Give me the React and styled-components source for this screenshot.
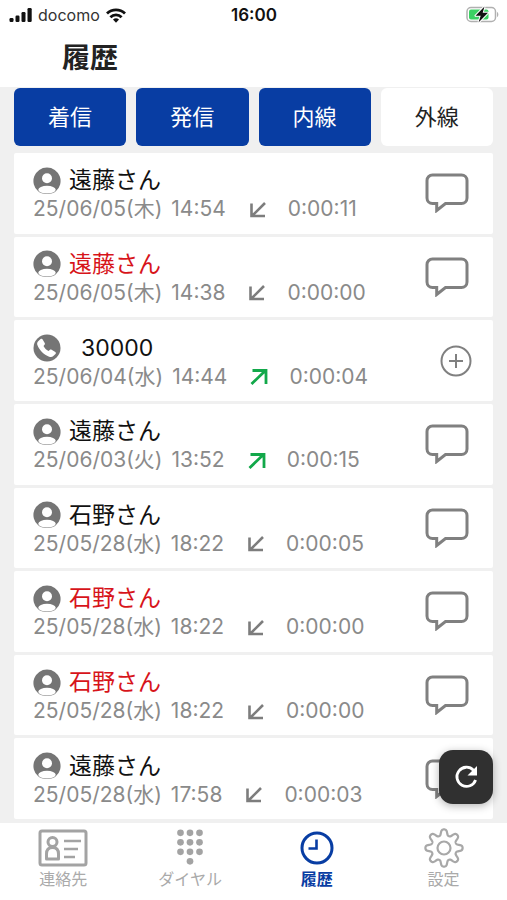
import React from "react";
import styled, { createGlobalStyle } from "styled-components";

const GlobalStyle = createGlobalStyle`
  * { box-sizing: border-box; }
  html, body { margin: 0; padding: 0; background: #fff; }
  body, button {
    font-family: Inter, "Noto Sans CJK JP", sans-serif;
  }
  button { border: 0; padding: 0; margin: 0; background: none; cursor: pointer; }
  svg { display: block; flex: none; }
`;

const Screen = styled.div`
  display: flex;
  flex-direction: column;
  min-height: 100vh;
  background: #f0f0f0;
  color: #111;
`;

const Header = styled.header`
  background: #fff;
  height: 87px;
`;

const StatusBar = styled.div`
  display: grid;
  grid-template-columns: 1fr auto 1fr;
  align-items: center;
  height: 30px;
  padding: 0 8px 0 9px;
`;

const Carrier = styled.div`
  display: flex;
  align-items: center;
  gap: 6px;
  font-size: 16px;
  line-height: 20px;
  color: #333;
`;

const Clock = styled.time`
  font-size: 17px;
  line-height: 20px;
  font-weight: 600;
`;

const Battery = styled.div`
  justify-self: end;
`;

const Title = styled.h1`
  margin: 0;
  padding-left: 62px;
  font-size: 28px;
  line-height: 56px;
  font-weight: 700;
  color: #222;
`;

const Filters = styled.div`
  display: grid;
  grid-template-columns: repeat(4, 1fr);
  gap: 10px;
  padding: 1px 14px 7px;
`;

const FilterButton = styled.button`
  height: 58px;
  border-radius: 6px;
  font-size: 22px;
  line-height: 32px;
  background: ${(p) => (p.$on ? "#083da3" : "#fff")};
  color: ${(p) => (p.$on ? "#fff" : "#222")};
`;

const List = styled.ul`
  flex: 1;
  display: flex;
  flex-direction: column;
  gap: 3px;
  margin: 0;
  padding: 0 14px 4px;
  list-style: none;
`;

const Row = styled.li`
  flex: 1;
  display: flex;
  align-items: center;
  justify-content: space-between;
  min-height: 76px;
  padding: 0 21px 0 19px;
  background: #fff;
  border-radius: 2px;
`;

const Entry = styled.div`
  display: flex;
  flex-direction: column;
  padding-top: 3px;
`;

const Name = styled.div`
  display: flex;
  align-items: center;
  gap: ${(p) => (p.$number ? "20px" : "8px")};
  font-size: 23px;
  line-height: 29px;
  color: ${(p) => (p.$missed ? "#d7141a" : "#111")};
`;

const Meta = styled.div`
  display: flex;
  align-items: center;
  font-size: 21px;
  line-height: 28px;
  color: #8a8a8a;
`;

const Time = styled.span`
  margin: 0 23px 0 9px;
`;

const Duration = styled.span`
  margin-left: 21px;
`;

const RowAction = styled.button`
  display: flex;
  margin-right: ${(p) => (p.$message ? "3px" : 0)};
`;

const Refresh = styled.button`
  position: fixed;
  right: 14px;
  bottom: 96px;
  display: flex;
  align-items: center;
  justify-content: center;
  width: 54px;
  height: 54px;
  border-radius: 14px;
  background: #303030;
  box-shadow: 0 2px 8px rgba(0, 0, 0, 0.3);
`;

const TabBar = styled.nav`
  display: grid;
  grid-template-columns: repeat(4, 1fr);
  height: 77px;
  background: #fff;
`;

const Tab = styled.button`
  display: flex;
  flex-direction: column;
  align-items: center;
  padding-top: 4px;
  font-size: 16px;
  line-height: 20px;
  font-weight: ${(p) => (p.$active ? 700 : 400)};
  color: ${(p) => (p.$active ? "#083da3" : "#aaa")};
`;

const TabIcon = styled.span`
  display: flex;
  align-items: center;
  height: 42px;
`;

const Signal = () => (
  <svg width="23" height="15" viewBox="0 0 23 15" fill="#111" aria-hidden="true">
    <rect x="0.500" y="10" width="4" height="4" rx="1.2" />
    <rect x="6.500" y="7.500" width="4" height="6.500" rx="1.2" />
    <rect x="12.500" y="4" width="4" height="10" rx="1.2" />
    <rect x="18.500" y="0" width="4.200" height="14" rx="1.2" />
  </svg>
);

const Wifi = () => (
  <svg width="20" height="15" viewBox="0 0 20 15" fill="none" stroke="#111" strokeWidth="2.8" aria-hidden="true">
    <path d="M1 5.4a13 13 0 0 1 18 0" />
    <path d="M4.4 9.2a8 8 0 0 1 11.2 0" />
    <path d="M7 11.6a4.4 4.4 0 0 1 6 0L10 14.8z" fill="#111" stroke="none" />
  </svg>
);

const BatteryIcon = () => (
  <svg width="33" height="18" viewBox="0 0 33 18" role="img" aria-label="充電中">
    <rect x="1" y="1.500" width="28.5" height="14" rx="4" fill="#fff" stroke="#b0b0b0" strokeWidth="1.5" />
    <path d="M31 6c1.8.6 1.8 4.4 0 5z" fill="#b0b0b0" />
    <rect x="3" y="3.500" width="19.500" height="10" rx="2" fill="#3bd163" />
    <path d="M18.500.5 9.500 9.800h5.200L12.500 16.500l9.500-9.800h-5.300z" fill="#111" stroke="#fff" strokeWidth="2" paintOrder="stroke" strokeLinejoin="round" />
  </svg>
);

const Person = () => (
  <svg width="28" height="28" viewBox="0 0 28 28" aria-hidden="true">
    <path d="M14 .5a13.500 13.500 0 0 1 8.800 23.800Q20 27 14 27t-8.800-2.700A13.500 13.500 0 0 1 14 .5z" fill="#757575" />
    <circle cx="14" cy="11.300" r="5" fill="#fff" />
    <ellipse cx="14" cy="22.700" rx="8.700" ry="3.900" fill="#fff" />
  </svg>
);

const Phone = () => (
  <svg width="28" height="28" viewBox="0 0 28 28" aria-hidden="true">
    <circle cx="14" cy="14" r="13.500" fill="#757575" />
    <path d="M5.200 7.200 7.600 5c.7-.5 1.500-.4 1.900.2l2.200 3.700c.4.600.3 1.400-.2 1.900l-1 1.100c1.200 2.300 2.700 3.800 5 5.100l1.200-1c.5-.5 1.300-.6 1.900-.2l3.700 2.200c.7.500.8 1.300.2 1.900l-2.200 2.200c-1 1-2.500 1.200-4.200.6-5.200-1.800-10-6.600-11.800-11.900-.4-1.300-.1-2.600.9-3.600z" fill="#fff" />
  </svg>
);

const Incoming = () => (
  <svg width="18" height="17" viewBox="0 0 18 17" fill="none" stroke="#7d7d7d" strokeWidth="2.600" aria-label="着信" role="img">
    <path d="M16 2 3 15M2.500 2.500V15H16" />
  </svg>
);

const Outgoing = () => (
  <svg width="18" height="17" viewBox="0 0 18 17" fill="none" stroke="#12a84a" strokeWidth="2.800" aria-label="発信" role="img">
    <path d="M1.500 16 16 2M2.500 2.500H16V16" />
  </svg>
);

const Bubble = () => (
  <svg width="44" height="40" viewBox="0 0 44 40" fill="none" stroke="#808080" strokeWidth="3" aria-hidden="true">
    <path d="M7.500 2h29a5.500 5.500 0 0 1 5.500 5.500v17.500a5.500 5.500 0 0 1-5.500 5.500H20.500l-8.800 7V30.500H7.500A5.500 5.500 0 0 1 2 25V7.500A5.500 5.500 0 0 1 7.500 2z" />
  </svg>
);

const Plus = () => (
  <svg width="32" height="32" viewBox="0 0 32 32" fill="none" stroke="#808080" strokeWidth="2" aria-hidden="true">
    <circle cx="16" cy="16" r="14.500" />
    <path d="M16 9v14M9 16h14" />
  </svg>
);

const Reload = () => (
  <svg width="26" height="26" viewBox="0 0 26 26" fill="none" aria-hidden="true">
    <path d="M20.500 6.200A9.600 9.600 0 1 0 22.600 16" stroke="#fff" strokeWidth="2.800" />
    <path d="M24 2v9.500H14.500z" fill="#fff" />
  </svg>
);

const Card = () => (
  <svg width="50" height="38" viewBox="0 0 50 38" fill="none" stroke="#a3a3a3" strokeWidth="3" aria-hidden="true">
    <rect x="2" y="2" width="46" height="34" rx="2" />
    <circle cx="14.500" cy="13" r="4.500" strokeWidth="3" />
    <path d="M8.500 30v-5c0-4 2-6.500 6-6.500s6 2.500 6 6.500v5z" strokeWidth="3" strokeLinejoin="round" />
    <path d="M26 12h17M26 20h14M26 28h11" strokeWidth="2.600" />
  </svg>
);

const dots = [
  [4, 4], [14, 4], [24, 4],
  [4, 14], [14, 14], [24, 14],
  [4, 24], [14, 24], [24, 24],
  [14, 34],
];

const Dial = () => (
  <svg width="28" height="38" viewBox="0 0 28 40" fill="#a3a3a3" aria-hidden="true">
    {dots.map(([x, y]) => (
      <circle key={`${x}-${y}`} cx={x} cy={y} r="3.500" />
    ))}
  </svg>
);

const History = () => (
  <svg width="34" height="34" viewBox="0 0 34 34" fill="none" stroke="#083da3" strokeWidth="3" aria-hidden="true">
    <circle cx="17" cy="17" r="15" />
    <path d="M16.500 8.500v9H8.500" strokeWidth="2.600" />
  </svg>
);

const gear = (() => {
  const pts = [];
  for (let i = 0; i <= 240; i += 1) {
    const a = (i / 240) * Math.PI * 2;
    const w = Math.tanh(1.5 * Math.cos(8 * a)) / Math.tanh(1.5);
    const r = 15.7 + 2.9 * w;
    pts.push(`${(20 + r * Math.sin(a)).toFixed(2)} ${(20 - r * Math.cos(a)).toFixed(2)}`);
  }
  return `M${pts.join("L")}Z`;
})();

const Gear = () => (
  <svg width="40" height="40" viewBox="0 0 40 40" fill="none" stroke="#a8a8a8" strokeWidth="2.200" strokeLinejoin="round" aria-hidden="true">
    <path d={gear} />
    <circle cx="20" cy="20" r="6.500" />
  </svg>
);

const calls = [
  { name: "遠藤さん", date: "25/06/05(木)", time: "14:54", length: "0:00:11" },
  { name: "遠藤さん", date: "25/06/05(木)", time: "14:38", length: "0:00:00", missed: true },
  { name: "30000", date: "25/06/04(水)", time: "14:44", length: "0:00:04", out: true, number: true },
  { name: "遠藤さん", date: "25/06/03(火)", time: "13:52", length: "0:00:15", out: true },
  { name: "石野さん", date: "25/05/28(水)", time: "18:22", length: "0:00:05" },
  { name: "石野さん", date: "25/05/28(水)", time: "18:22", length: "0:00:00", missed: true },
  { name: "石野さん", date: "25/05/28(水)", time: "18:22", length: "0:00:00", missed: true },
  { name: "遠藤さん", date: "25/05/28(水)", time: "17:58", length: "0:00:03" },
];

const filters = [
  { label: "着信", on: true },
  { label: "発信", on: true },
  { label: "内線", on: true },
  { label: "外線", on: false },
];

const tabs = [
  { label: "連絡先", Icon: Card },
  { label: "ダイヤル", Icon: Dial },
  { label: "履歴", Icon: History, active: true },
  { label: "設定", Icon: Gear },
];

export default function App() {
  return (
    <Screen>
      <GlobalStyle />
      <Header>
        <StatusBar>
          <Carrier>
            <Signal />
            docomo
            <Wifi />
          </Carrier>
          <Clock>16:00</Clock>
          <Battery>
            <BatteryIcon />
          </Battery>
        </StatusBar>
        <Title>履歴</Title>
      </Header>
      <Filters>
        {filters.map((f) => (
          <FilterButton key={f.label} type="button" $on={f.on} aria-pressed={f.on}>
            {f.label}
          </FilterButton>
        ))}
      </Filters>
      <List>
        {calls.map((c, i) => (
          <Row key={i}>
            <Entry>
              <Name $missed={c.missed} $number={c.number}>
                {c.number ? <Phone /> : <Person />}
                {c.name}
              </Name>
              <Meta>
                <span>{c.date}</span>
                <Time>{c.time}</Time>
                {c.out ? <Outgoing /> : <Incoming />}
                <Duration>{c.length}</Duration>
              </Meta>
            </Entry>
            {c.number ? (
              <RowAction type="button" aria-label="連絡先に追加">
                <Plus />
              </RowAction>
            ) : (
              <RowAction type="button" aria-label="メッセージ" $message>
                <Bubble />
              </RowAction>
            )}
          </Row>
        ))}
      </List>
      <Refresh type="button" aria-label="更新">
        <Reload />
      </Refresh>
      <TabBar>
        {tabs.map(({ label, Icon, active }) => (
          <Tab key={label} type="button" $active={active} aria-current={active ? "page" : undefined}>
            <TabIcon>
              <Icon />
            </TabIcon>
            {label}
          </Tab>
        ))}
      </TabBar>
    </Screen>
  );
}
